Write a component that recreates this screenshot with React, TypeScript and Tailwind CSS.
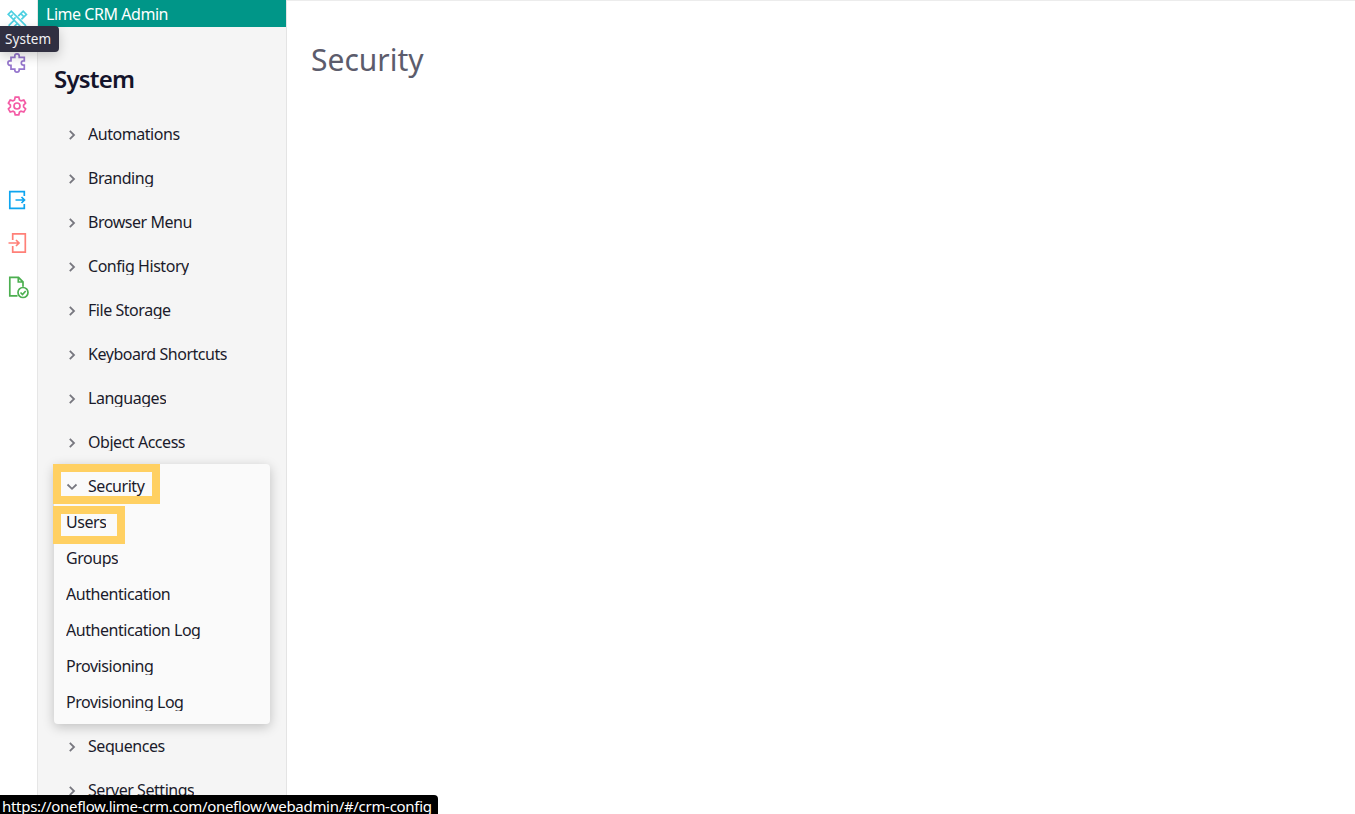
import type { ReactNode } from "react";

const before = [
  "Automations",
  "Branding",
  "Browser Menu",
  "Config History",
  "File Storage",
  "Keyboard Shortcuts",
  "Languages",
  "Object Access",
];

const securityItems = [
  "Users",
  "Groups",
  "Authentication",
  "Authentication Log",
  "Provisioning",
  "Provisioning Log",
];

const after = ["Sequences", "Server Settings"];

function Icon({ color, children }: { color: string; children: ReactNode }) {
  return (
    <svg
      className="block h-6 w-6 shrink-0"
      viewBox="0 0 24 24"
      fill="none"
      stroke={color}
      strokeWidth="1.7"
    >
      {children}
    </svg>
  );
}

function Chevron({ open = false }: { open?: boolean }) {
  return (
    <svg
      className="h-3 w-3 shrink-0"
      viewBox="0 0 12 12"
      fill="none"
      stroke="#77777f"
      strokeWidth="1.8"
    >
      <path d={open ? "M1.500 4.500 6 8.800l4.500-4.300" : "M3.800 2.800 8 7l-4.200 4.200"} />
    </svg>
  );
}

function MenuItem({ label }: { label: string }) {
  return (
    <div className="flex h-11 items-center gap-2.5 pl-3">
      <Chevron />
      <span className="h-[18px] overflow-hidden whitespace-nowrap leading-[18px]">{label}</span>
    </div>
  );
}

export default function App() {
  return (
    <div className="relative flex h-screen overflow-hidden bg-white font-['Noto_Sans',sans-serif] text-[16px] tracking-[-0.46px] text-[#1b1b2b]">
      {/* Icon rail */}
      <nav className="flex w-[38px] shrink-0 flex-col border-r border-[#e6e6e6] pl-[5px] pt-[7px]">
        <Icon color="#4dd0e1">
          <path d="M3.200 7.300 6.300 4.200 20.500 18.400v3.100h-3.100z M5.800 9.500l2-2 M8.600 12.300l2-2" />
          <path d="m13.200 9.200 5-5 3.200 3.200-5 5 M9.500 12.900l-5.300 5.300v3.200h3.200l5.300-5.300 M15.800 6.600l3.200 3.200" />
        </Icon>
        <div className="mt-5">
          <Icon color="#9575cd">
            <path d="M6 6.300h3.800V5c0-1.400.7-2.200 2.200-2.200s2.200.8 2.200 2.200v1.300h5.100v3.600h-.8c-1.300 0-2.200.9-2.200 2.100s.9 2.100 2.200 2.100h.8v4.100h-5.100V19c0 1.400-.7 2.200-2.200 2.200s-2.200-.8-2.200-2.200v-.8H6v-3.900H5c-1.300 0-2.100-.9-2.100-2.300S3.700 9.900 5 9.900h1z" />
          </Icon>
        </div>
        <div className="mt-[19px]">
          <Icon color="#f45ba5">
            <circle cx="12" cy="12" r="3" />
            <path d="M10.200 3.200h3.600l.7 2.800 1.500.9 2.800-.8 1.800 3.100-2 2v1.700l2 2-1.800 3.100-2.800-.8-1.500.9-.7 2.700h-3.600l-.7-2.700-1.500-.9-2.800.8-1.800-3.100 2-2v-1.700l-2-2 1.800-3.100 2.800.8 1.500-.9z" />
          </Icon>
        </div>
        <div className="mt-[70px]">
          <Icon color="#0ea5f0">
            <path d="M19.300 8V3.700H4.800v16.600h14.500V16M10.500 12h9M16.500 9l3 3-3 3" />
          </Icon>
        </div>
        <div className="mt-[19px]">
          <Icon color="#ff8078">
            <path d="M7.700 9V2.800h12.600v18.400H7.700V15M3.500 12h10.500M11 9l3 3-3 3" />
          </Icon>
        </div>
        <div className="mt-5">
          <Icon color="#4caf50">
            <path d="M12.500 20.800H4.800V2.300h8.700L18 6.800v5M13.300 2.500V7H18" />
            <circle cx="18" cy="17.500" r="5" />
            <path d="m15.500 17.500 2 2 3.200-3.500" />
          </Icon>
        </div>
      </nav>

      {/* Side menu */}
      <aside className="w-[249px] shrink-0 border-r border-[#e4e4e4] bg-[#f5f5f5]">
        <header className="h-[27px] bg-[#009688] pl-2 leading-[28px] text-white">
          Lime CRM Admin
        </header>
        <div className="px-4">
          <h1 className="flex h-[85px] items-center pt-[18px] text-2xl font-semibold tracking-[-0.8px] text-[#14142b]">
            System
          </h1>
          {before.map((label) => (
            <MenuItem key={label} label={label} />
          ))}
          <section className="h-[260px] rounded bg-[#fafafa] shadow-[0_3px_12px_rgba(0,0,0,0.22)]">
            <div className="relative flex h-10 items-center gap-2.5 pl-3 pt-1">
              <Chevron open />
              <span>Security</span>
              <div className="absolute -left-px top-0 h-10 w-[107px] border-[8px] border-[#ffd062]" />
            </div>
            {securityItems.map((label, i) => (
              <div key={label} className="relative flex h-9 items-center pl-3">
                <span className="h-[18px] overflow-hidden leading-[18px]">{label}</span>
                {i === 0 && (
                  <div className="absolute -left-px top-[2px] h-[38px] w-[72px] border-[8px] border-[#ffd062]" />
                )}
              </div>
            ))}
          </section>
          {after.map((label) => (
            <MenuItem key={label} label={label} />
          ))}
        </div>
      </aside>

      <main className="flex-1 border-t border-[#ececec] pl-6 pt-[38px]">
        <h2 className="text-[30px] leading-[42px] tracking-normal text-[#5c5c6c]">Security</h2>
      </main>

      {/* Tooltip over the rail */}
      <div className="absolute left-0 top-[26px] h-[26px] w-[59px] rounded-r bg-[#302f41] pl-[5px] text-[13.5px] leading-[27px] tracking-[0.05px] text-[#f2f2f5] shadow-[0_4px_12px_rgba(0,0,0,0.2)]">
        System
      </div>

      {/* Link status bar */}
      <div className="absolute bottom-0 left-0 h-[19px] w-[438px] overflow-hidden whitespace-nowrap rounded-tr bg-black pl-[2px] text-[15px] leading-[23px] tracking-[-0.3px] text-white">
        https://oneflow.lime-crm.com/oneflow/webadmin/#/crm-config
      </div>
    </div>
  );
}
